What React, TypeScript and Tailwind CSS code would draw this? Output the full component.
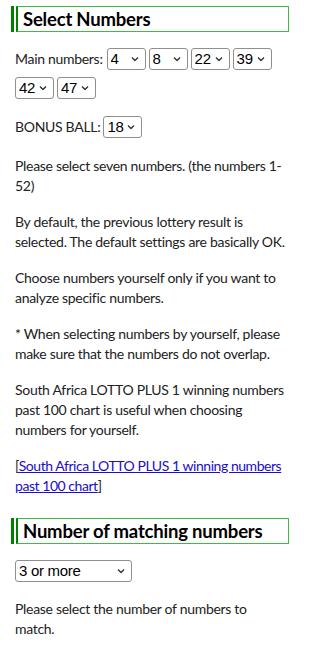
import React, { useState } from 'react';

const nums = Array.from({ length: 52 }, (_, i) => i + 1);

function Chevron() {
  return (
    <svg
      className="pointer-events-none absolute right-[7px] top-1/2 -translate-y-1/2"
      width="8"
      height="5"
      viewBox="0 0 8 5"
      fill="none"
    >
      <path d="M1 1l3 3 3-3" stroke="#333" strokeWidth="1.4" />
    </svg>
  );
}

function Picker({
  value,
  onChange,
  width,
  children,
}: {
  value: string;
  onChange: (v: string) => void;
  width: string;
  children: React.ReactNode;
}) {
  return (
    <span className={`relative inline-block ${width}`}>
      <select
        className="block h-[22px] w-full appearance-none rounded-[3px] border border-[#8f8f8f] bg-white pl-[3px] pr-[16px] font-['Liberation_Sans',Arial,sans-serif] text-[15px] leading-[20px] text-black"
        value={value}
        onChange={(e) => onChange(e.target.value)}
      >
        {children}
      </select>
      <Chevron />
    </span>
  );
}

function NumSelect({ value }: { value: number }) {
  const [v, setV] = useState(String(value));
  return (
    <Picker value={v} onChange={setV} width="w-[39px]">
      {nums.map((n) => (
        <option key={n} value={n}>
          {n}
        </option>
      ))}
    </Picker>
  );
}

function Heading({ children }: { children: React.ReactNode }) {
  return (
    <h2 className="-mx-[4px] border-l-[3px] border-[#008000] pl-[2px]">
      <div className="border border-[#44b844] border-l-[2px] border-l-[#008000] px-[5px] font-['Lato',sans-serif] text-[18.5px] font-bold leading-[24px] tracking-[-0.2px] text-black">
        {children}
      </div>
    </h2>
  );
}

export default function App() {
  const main = [4, 8, 22, 39, 42, 47];
  const [match, setMatch] = useState('3');

  return (
    <div className="min-h-[655px] w-[300px] overflow-hidden bg-white px-[15px] pt-[6px] font-['Lato','Noto_Sans',sans-serif] text-[14px] leading-[20px] tracking-[-0.3px] text-[#222]">
      <Heading>Select Numbers</Heading>

      <div className="mt-[16px] flex flex-wrap items-center gap-x-[3px] gap-y-[7px]">
        <span className="mr-[1px]">Main numbers:</span>
        {main.map((n, i) => (
          <NumSelect key={i} value={n} />
        ))}
      </div>

      <div className="mt-[17px] flex items-center gap-x-[3px]">
        <span>BONUS BALL:</span>
        <NumSelect value={18} />
      </div>

      <p className="mt-[18px]">Please select seven numbers. (the numbers 1-52)</p>
      <p className="mt-4">
        By default, the previous lottery result is selected. The default settings are basically OK.
      </p>
      <p className="mt-4">Choose numbers yourself only if you want to analyze specific numbers.</p>
      <p className="mt-4">
        * When selecting numbers by yourself, please make sure that the numbers do not overlap.
      </p>
      <p className="mt-4">
        South Africa LOTTO PLUS 1 winning numbers past 100 chart is useful when choosing numbers for
        yourself.
      </p>
      <p className="mt-4 tracking-[-0.45px]">
        [
        <a href="#" className="text-[#1a0dcc] underline">
          South Africa LOTTO PLUS 1 winning numbers past 100 chart
        </a>
        ]
      </p>

      <div className="mt-[22px]">
        <Heading>Number of matching numbers</Heading>
      </div>

      <div className="mt-[16px]">
        <Picker value={match} onChange={setMatch} width="w-[117px]">
          <option value="3">3 or more</option>
          <option value="4">4 or more</option>
          <option value="5">5 or more</option>
          <option value="6">6 or more</option>
        </Picker>
      </div>

      <p className="mt-[17px]">Please select the number of numbers to match.</p>
    </div>
  );
}
